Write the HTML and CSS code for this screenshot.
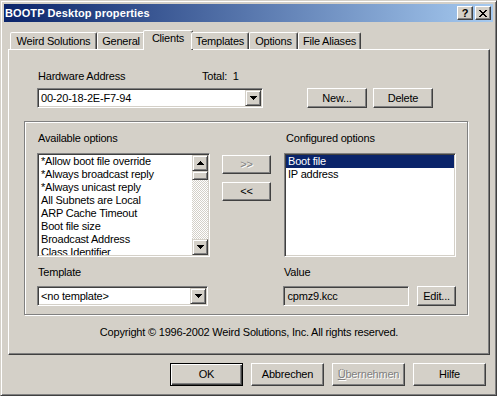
FILE: index.html
```html
<!DOCTYPE html>
<html>
<head>
<meta charset="utf-8">
<title>BOOTP Desktop properties</title>
<link rel="stylesheet" href="styles.css">
</head>
<body>
<div class="window">
  <div class="titlebar">
    <span class="title">BOOTP Desktop properties</span>
    <div class="tbtns">
      <span class="tbtn help">?</span>
      <span class="tbtn close"><svg width="8" height="7" viewBox="0 0 8 7"><path d="M0 0h2v1h1v1h2V1h1V0h2v1H7v1H6v1H5v1h1v1h1v1h1v1H6V6H5V5H3v1H2v1H0V6h1V5h1V4h1V3H2V2H1V1H0z" fill="#000"/></svg></span>
    </div>
  </div>

  <div class="tabs">
    <div class="tab t1">Weird Solutions</div>
    <div class="tab t2">General</div>
    <div class="tab t3 active">Clients</div>
    <div class="tab t4">Templates</div>
    <div class="tab t5">Options</div>
    <div class="tab t6">File Aliases</div>
  </div>

  <div class="panel">
    <div class="hw-labels">
      <span class="hw-label">Hardware Address</span>
      <span>Total:&nbsp; 1</span>
    </div>
    <div class="hw-row">
      <div class="combo sunken hw-combo">
        <span class="combo-text">00-20-18-2E-F7-94</span>
        <span class="raised arrow-btn"><svg width="7" height="4" viewBox="0 0 7 4"><path d="M0 0h7v1H6v1H5v1H4v1H3V3H2V2H1V1H0z" fill="#000"/></svg></span>
      </div>
      <button class="btn btn-new">New...</button>
      <button class="btn btn-del">Delete</button>
    </div>

    <div class="group">
      <div class="g-row">
        <span class="col-l lbl">Available options</span>
        <span class="col-r lbl">Configured options</span>
      </div>
      <div class="g-row lists">
        <div class="listbox sunken col-l">
          <ul class="items">
            <li>*Allow boot file override</li>
            <li>*Always broadcast reply</li>
            <li>*Always unicast reply</li>
            <li>All Subnets are Local</li>
            <li>ARP Cache Timeout</li>
            <li>Boot file size</li>
            <li>Broadcast Address</li>
            <li>Class Identifier</li>
          </ul>
          <div class="vscroll">
            <span class="raised sb-btn"><svg width="7" height="4" viewBox="0 0 7 4"><path d="M3 0h1v1h1v1h1v1h1v1H0V3h1V2h1V1h1z" fill="#000"/></svg></span>
            <span class="raised sb-thumb"></span>
            <span class="sb-track"></span>
            <span class="raised sb-btn"><svg width="7" height="4" viewBox="0 0 7 4"><path d="M0 0h7v1H6v1H5v1H4v1H3V3H2V2H1V1H0z" fill="#000"/></svg></span>
          </div>
        </div>
        <div class="move-btns">
          <button class="btn move disabled">&gt;&gt;</button>
          <button class="btn move">&lt;&lt;</button>
        </div>
        <div class="listbox sunken col-r">
          <ul class="items">
            <li class="selected">Boot file</li>
            <li>IP address</li>
          </ul>
        </div>
      </div>
      <div class="g-row row-c">
        <span class="col-l lbl">Template</span>
        <span class="col-r lbl val-lbl">Value</span>
      </div>
      <div class="g-row row-d">
        <div class="combo sunken tpl-combo">
          <span class="combo-text">&lt;no template&gt;</span>
          <span class="raised arrow-btn"><svg width="7" height="4" viewBox="0 0 7 4"><path d="M0 0h7v1H6v1H5v1H4v1H3V3H2V2H1V1H0z" fill="#000"/></svg></span>
        </div>
        <div class="value-box sunken">cpmz9.kcc</div>
        <button class="btn btn-edit">Edit...</button>
      </div>
    </div>

    <div class="copyright">Copyright © 1996-2002 Weird Solutions, Inc. All rights reserved.</div>
  </div>

  <div class="footer">
    <button class="btn fbtn btn-default">OK</button>
    <button class="btn fbtn">Abbrechen</button>
    <button class="btn fbtn disabled"><u>Ü</u>bernehmen</button>
    <button class="btn fbtn">Hilfe</button>
  </div>
</div>
</body>
</html>
```

FILE: styles.css
```css
* { box-sizing: border-box; }
html, body { margin: 0; padding: 0; }
body {
  font: 11px/13px "Liberation Sans", Arial, sans-serif;
  letter-spacing: -0.2px;
  color: #000;
  background: #d4d0c8;
}

.window {
  width: 497px;
  height: 396px;
  background: #d4d0c8;
  border: 1px solid;
  border-color: #d4d0c8 #404040 #404040 #d4d0c8;
  box-shadow: inset 1px 1px #fff, inset -1px -1px #808080;
  padding: 3px;
  display: flex;
  flex-direction: column;
}

/* title bar */
.titlebar {
  height: 18px;
  flex: none;
  display: flex;
  align-items: center;
  justify-content: space-between;
  padding: 0 2px 0 1px;
  background: linear-gradient(to right, #0a246a, #a6caf0);
}
.title { color: #fff; font-weight: bold; line-height: 18px; letter-spacing: 0.1px; }
.tbtns { display: flex; gap: 2px; }
.tbtn {
  width: 16px;
  height: 14px;
  background: #d4d0c8;
  border: 1px solid;
  border-color: #fff #404040 #404040 #fff;
  box-shadow: inset -1px -1px #808080;
  display: flex;
  align-items: center;
  justify-content: center;
  font-weight: bold;
  font-size: 11px;
  line-height: 12px;
  letter-spacing: 0;
}

/* tabs */
.tabs {
  display: flex;
  align-items: flex-end;
  height: 19px;
  flex: none;
  margin: 8px 0 0 6px;
  position: relative;
  z-index: 1;
}
.tab {
  height: 17px;
  border: 1px solid;
  border-bottom: none;
  border-color: #fff #404040 transparent #fff;
  box-shadow: inset -1px 0 #808080;
  border-radius: 2px 2px 0 0;
  display: flex;
  align-items: center;
  justify-content: center;
  background: #d4d0c8;
  white-space: nowrap;
}
.tab.active {
  height: 20px;
  margin: 0 -2px -1px;
  align-items: flex-start;
  padding-top: 1px;
}
.t1 { width: 87px; }
.t2 { width: 48px; }
.t3 { width: 50px; }
.t4 { width: 58px; }
.t5 { width: 49px; }
.t6 { width: 63px; }

/* tab page */
.panel {
  margin-left: 4px;
  width: 482px;
  height: 306px;
  flex: none;
  border-top: 1px solid #fff;
  border-left: 1px solid #fff;
  border-right: 1px solid #404040;
  border-bottom: 1px solid #404040;
  box-shadow: inset -1px -1px #808080;
  padding-left: 15px;
  display: flex;
  flex-direction: column;
}

.hw-labels { display: flex; margin: 20px 0 0 14px; }
.hw-label { width: 164px; }
.hw-row { display: flex; margin: 5px 0 0 13px; }

/* common 3D */
.sunken {
  background: #fff;
  border: 1px solid;
  border-color: #808080 #fff #fff #808080;
  box-shadow: inset 1px 1px #404040, inset -1px -1px #d4d0c8;
}
.raised {
  background: #d4d0c8;
  border: 1px solid;
  border-color: #d4d0c8 #404040 #404040 #d4d0c8;
  box-shadow: inset 1px 1px #fff, inset -1px -1px #808080;
  display: flex;
  align-items: center;
  justify-content: center;
}

.btn {
  font: inherit;
  letter-spacing: inherit;
  color: #000;
  background: #d4d0c8;
  border: 1px solid;
  border-color: #fff #404040 #404040 #fff;
  box-shadow: inset -1px -1px #808080;
  padding: 0;
  margin: 0;
  height: 20px;
  display: flex;
  align-items: center;
  justify-content: center;
}
.btn.disabled { color: #808080; text-shadow: 1px 1px #fff; }
.btn-default {
  border-color: #000;
  box-shadow: inset 1px 1px #fff, inset -1px -1px #404040, inset -2px -2px #808080;
}

/* combo */
.combo {
  height: 20px;
  padding: 1px;
  display: flex;
  align-items: stretch;
}
.combo-text { flex: 1; padding-left: 2px; line-height: 16px; white-space: nowrap; }
.arrow-btn { width: 16px; flex: none; }
.hw-combo { width: 226px; }
.btn-new { margin-left: 44px; width: 60px; }
.btn-del { margin-left: 6px; width: 60px; }

/* group box */
.group {
  margin-top: 13px;
  width: 444px;
  border: 1px solid #808080;
  box-shadow: inset 1px 1px #fff, 1px 1px #fff;
  padding: 10px 11px 8px 12px;
}
.g-row { display: flex; }
.col-l { width: 173px; flex: none; }
.col-r { width: 172px; flex: none; margin-left: 74px; }
.lbl { padding-left: 1px; height: 13px; }
.col-r.lbl { padding-left: 2px; }
.col-r.val-lbl { padding-left: 0; }

.lists { margin-top: 8px; }
.listbox { height: 104px; display: flex; padding: 1px; overflow: hidden; }
.items { list-style: none; margin: 0; padding: 0; flex: 1; overflow: hidden; }
.items li { height: 13px; line-height: 13px; padding-left: 2px; white-space: nowrap; }
.items li.selected { background: #0a246a; color: #fff; }

.vscroll {
  width: 16px;
  flex: none;
  display: flex;
  flex-direction: column;
  background: repeating-conic-gradient(#d4d0c8 0 25%, #fff 0 50%) 0 0 / 2px 2px;
}
.sb-btn { height: 16px; flex: none; }
.sb-thumb { height: 9px; flex: none; }
.sb-track { flex: 1; }

.move-btns {
  width: 49px;
  flex: none;
  margin-left: 12px;
  padding-top: 2px;
  display: flex;
  flex-direction: column;
}
.move { width: 49px; height: 19px; }
.move + .move { margin-top: 8px; }
.lists .col-r { margin-left: 13px; }

.row-c { margin-top: 9px; }
.row-d { margin-top: 7px; }
.tpl-combo { width: 172px; }
.value-box {
  margin-left: 75px;
  width: 126px;
  height: 20px;
  background: #d4d0c8;
  padding-left: 3px;
  line-height: 18px;
}
.btn-edit { margin-left: 8px; width: 39px; }

.copyright { margin: 11px 0 0 -15px; text-align: center; white-space: nowrap; }

/* footer */
.footer {
  display: flex;
  justify-content: flex-end;
  gap: 8px;
  margin-top: 8px;
  padding-right: 7px;
}
.fbtn { width: 73px; height: 23px; }
```
